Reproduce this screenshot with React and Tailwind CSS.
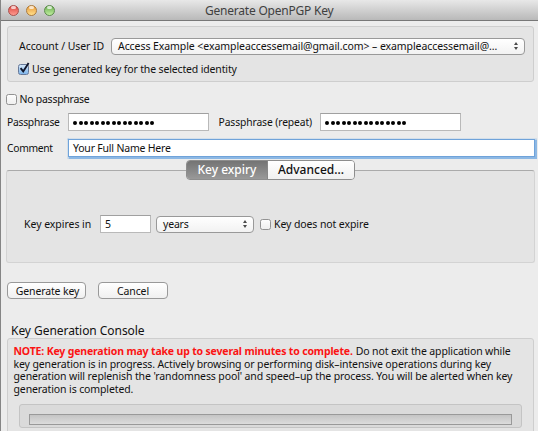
function Label({ className = '', children }) {
  return <span className={`whitespace-nowrap ${className}`}>{children}</span>;
}

function Arrows() {
  return (
    <svg className="h-[8px] w-[6px] shrink-0" viewBox="0 0 6 8" fill="#4a4a4a">
      <path d="M3 0 5 3H1zM3 8 1 5h4z" />
    </svg>
  );
}

function Checkbox({ checked = false }) {
  return (
    <span
      className={`block h-[11px] w-[11px] shrink-0 rounded-[2.5px] border ${
        checked
          ? 'border-[#66799a] bg-linear-to-b from-[#d3e6f8] to-[#7fb5ea]'
          : 'border-[#929292] bg-linear-to-b from-[#fdfdfd] to-[#efefef]'
      }`}
    >
      {checked && (
        <svg className="-mt-[3px] h-[12px] w-[12px]" viewBox="0 0 12 12" fill="none" stroke="#10152a" strokeWidth="1.9">
          <path d="M1.6 6.2 4.2 9.4 9.6 1" />
        </svg>
      )}
    </span>
  );
}

function Light({ className }) {
  return (
    <span className={`relative block h-[11px] w-[11px] rounded-full border ${className}`}>
      <span className="absolute left-[2px] top-0 h-[3px] w-[5px] rounded-full bg-white/70" />
    </span>
  );
}

function Password() {
  return (
    <div className="flex h-[18px] w-[141px] items-center gap-[1.5px] border border-[#b9b9b9] border-t-[#a0a0a0] bg-white pl-[4px] pt-[1px]">
      {Array.from({ length: 15 }, (_, i) => (
        <span key={i} className="block h-[4px] w-[4px] rounded-full bg-black" />
      ))}
    </div>
  );
}

export default function App() {
  return (
    <div className="h-[431px] w-[538px] overflow-hidden border-l border-[#858585] bg-[#ececec] font-['Noto_Sans','Open_Sans',sans-serif] text-[10.5px] leading-[12px] text-[#111]">
      <header className="flex h-[21px] items-center border-b border-[#777] bg-linear-to-b from-[#e8e8e8] to-[#b9b9b9] pl-[7px]">
        <div className="flex gap-[7px]">
          <Light className="border-[#a9504c] bg-linear-to-b from-[#d9403d] to-[#ff9a90]" />
          <Light className="border-[#ac7a3c] bg-linear-to-b from-[#e99a35] to-[#ffdf8a]" />
          <Light className="border-[#5c8a4c] bg-linear-to-b from-[#69ad50] to-[#c0ee9e]" />
        </div>
        <Label className="ml-[150px] mt-[2px] text-[12px] tracking-[-0.22px] text-[#404040]">Generate OpenPGP Key</Label>
      </header>

      <section className="ml-[6px] mt-[5px] h-[56px] w-[527px] rounded-[3px] border border-[#cecece] bg-[#e4e4e4]">
        <div className="mt-[11px] flex h-[16px] items-center">
          <Label className="ml-[11px] w-[92px] tracking-[-0.06px]">Account / User ID</Label>
          <div className="flex h-[17px] w-[414px] items-center justify-between rounded-[4px] border border-[#999] bg-linear-to-b from-white to-[#f2f2f2] pl-[6px] pr-[5px]">
            <Label className="tracking-[-0.07px]">Access Example &lt;exampleaccessemail@gmail.com&gt; – exampleaccessemail@…</Label>
            <Arrows />
          </div>
        </div>
        <div className="ml-[10px] mt-[9px] flex h-[12px] items-center gap-[3px]">
          <Checkbox checked />
          <Label className="tracking-[-0.15px]">Use generated key for the selected identity</Label>
        </div>
      </section>

      <div className="ml-[5px] mt-[11px] flex h-[12px] items-center gap-[2.5px]">
        <Checkbox />
        <Label className="tracking-[-0.26px]">No passphrase</Label>
      </div>

      <div className="ml-[6px] mt-[8px] flex h-[18px] items-center">
        <Label className="w-[61px] text-[10.3px] tracking-[-0.25px]">Passphrase</Label>
        <Password />
        <Label className="ml-[9.5px] w-[101.5px] text-[10.3px] tracking-[-0.1px]">Passphrase (repeat)</Label>
        <Password />
      </div>

      <div className="ml-[6px] mt-[8px] flex h-[18px] items-center">
        <Label className="w-[61px] text-[10.3px] tracking-[-0.3px]">Comment</Label>
        <div className="flex h-[18px] w-[467px] items-center border border-[#6fa3da] bg-white pl-[4px] shadow-[0_0_1px_1.5px_#8db8e4]">
          <Label className="tracking-[-0.2px]">Your Full Name Here</Label>
        </div>
      </div>

      <section className="relative ml-[5px] mt-[13px] h-[93px] w-[529px] rounded-[3px] border border-[#d3d3d3] border-t-[#aaa] bg-[#e4e4e4]">
        <div className="absolute left-[179px] top-[-11px] flex h-[20px] w-[169px] overflow-hidden rounded-[4px] border border-[#8d8d8d] text-[12px]">
          <div className="flex w-[80px] items-center justify-center bg-linear-to-b from-[#747474] to-[#999] text-white">
            <Label className="font-medium">Key expiry</Label>
          </div>
          <div className="flex flex-1 items-center justify-center border-l border-[#888] bg-linear-to-b from-white to-[#f0f0f0]">
            <Label className="font-medium">Advanced...</Label>
          </div>
        </div>
        <div className="ml-[17px] mt-[44px] flex h-[18px] items-center">
          <Label className="w-[76px] tracking-[-0.04px]">Key expires in</Label>
          <div className="flex h-[18px] w-[51px] items-center border border-[#b9b9b9] border-t-[#a0a0a0] bg-white pl-[4px]">5</div>
          <div className="ml-[5px] flex h-[17px] w-[98px] items-center justify-between rounded-[4px] border border-[#999] bg-linear-to-b from-white to-[#f2f2f2] pl-[6px] pr-[5px]">
            <Label className="tracking-[-0.2px]">years</Label>
            <Arrows />
          </div>
          <div className="ml-[6px] flex items-center gap-[3px]">
            <Checkbox />
            <Label className="tracking-[-0.1px]">Key does not expire</Label>
          </div>
        </div>
      </section>

      <div className="ml-[6px] mt-[19px] flex gap-[12px]">
        <button className="h-[17px] w-[79px] whitespace-nowrap rounded-[4px] border border-[#999] bg-linear-to-b from-white to-[#f0f0f0] pl-[2px] tracking-[-0.15px]">Generate key</button>
        <button className="h-[17px] w-[70px] whitespace-nowrap rounded-[4px] border border-[#999] bg-linear-to-b from-white to-[#f0f0f0] tracking-[-0.1px]">Cancel</button>
      </div>

      <h2 className="ml-[10px] mt-[24px] h-[15px] text-[12px] leading-[15px]">
        <Label className="tracking-[-0.05px]">Key Generation Console</Label>
      </h2>
      <section className="ml-[6px] h-[100px] w-[527px] rounded-t-[3px] border border-[#cecece] bg-[#e4e4e4]">
        <div className="ml-[5.5px] mt-[6px] text-[10.5px] leading-[12.5px] tracking-[-0.12px]">
          <div className="flex">
            <Label className="mr-[3px] font-bold tracking-[-0.17px] text-[#fb1414]">NOTE: Key generation may take up to several minutes to complete.</Label>
            <Label>Do not exit the application while</Label>
          </div>
          <div className="flex"><Label>key generation is in progress. Actively browsing or performing disk–intensive operations during key</Label></div>
          <div className="flex"><Label>generation will replenish the 'randomness pool' and speed–up the process. You will be alerted when key</Label></div>
          <div className="flex"><Label>generation is completed.</Label></div>
        </div>
        <div className="ml-[11px] mt-[9px] h-[24px] w-[503px] rounded-[3px] border border-[#c4c4c4] bg-[#dadada] px-[9px] pt-[9px]">
          <div className="h-[11px] border border-[#999] bg-linear-to-b from-[#c4c4c4] to-[#dcdcdc]" />
        </div>
      </section>
    </div>
  );
}
